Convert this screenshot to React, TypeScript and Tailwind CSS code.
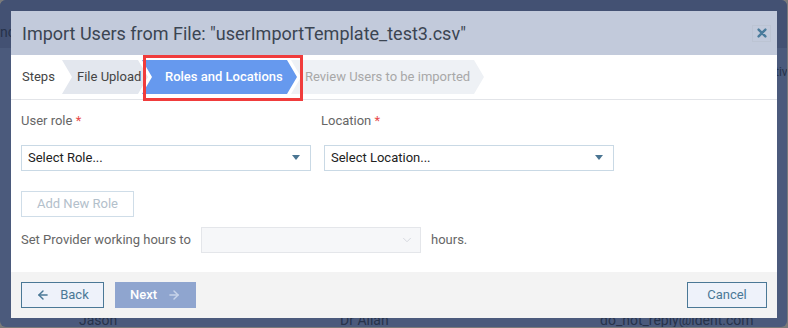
import { ArrowLeft, ArrowRight, ChevronDown } from 'lucide-react'

const font = { fontFamily: 'Roboto, "Liberation Sans", sans-serif' }

const chevron = 'polygon(0 0, calc(100% - 10px) 0, 100% 50%, calc(100% - 10px) 100%, 0 100%, 10px 50%)'

function Step({ label, cls }: { label: string; cls: string }) {
  return (
    <div className={`flex h-[34px] shrink-0 items-center text-[13px] ${cls}`} style={{ clipPath: chevron }}>
      {label}
    </div>
  )
}

function Caret() {
  return <span className="h-0 w-0 border-x-[4px] border-t-[5px] border-x-transparent border-t-[#4a7592]" />
}

export default function App() {
  return (
    <div className="h-[328px] w-[788px] overflow-hidden bg-[#7a7a7a]" style={font}>
      <div className="relative h-[327px] w-[787px] overflow-hidden rounded-[6px] bg-[#4b5a7c]">
        {/* page behind the modal */}
        <div className="h-[48px] bg-[#435173]" />
        <span className="absolute left-0 top-[22px] text-[14px] text-[#26324a]">nc</span>
        <span className="absolute left-[775px] top-[63px] text-[12px] text-[#26324a]">tiv</span>
        <span className="absolute left-[79px] top-[310px] text-[14px] text-[#26324a]">Jason</span>
        <span className="absolute left-[340px] top-[310px] text-[14px] text-[#26324a]">Dr Allan</span>
        <span className="absolute left-[600px] top-[310px] text-[14px] text-[#26324a]">do_not_reply@ident.com</span>

        {/* modal */}
        <div className="absolute left-[11px] top-[11px] flex h-[307px] w-[766px] flex-col bg-white">
          <div className="flex h-[44px] items-center justify-between bg-[#c2cadb] pl-[11px] pr-[6px]">
            <span className="text-[18px] text-[#3b4552]">Import Users from File: "userImportTemplate_test3.csv"</span>
            <span className="flex h-[17px] w-[19px] items-center justify-center border border-[#bcc4d3] text-[#4b7c9c]">
              <svg width="10" height="10" viewBox="0 0 10 10">
                <path d="M1.6 1.6 L8.4 8.4 M8.4 1.6 L1.6 8.4" stroke="currentColor" strokeWidth="2.4" strokeLinecap="round" />
              </svg>
            </span>
          </div>

          <div className="relative flex h-[45px] items-center border-b border-[#e2e4e8] pl-[11px]">
            <span className="w-[40px] text-[13px] text-[#444]">Steps</span>
            <Step label="File Upload" cls="w-[86px] pl-[15px] bg-[#e3e7ee] text-[#444]" />
            <Step label="Roles and Locations" cls="-ml-[6px] w-[155px] pl-[23px] bg-[#6699ee] text-white font-medium" />
            <Step label="Review Users to be imported" cls="-ml-[6px] w-[193px] pl-[14px] bg-[#eef1f5] text-[#a8a8a8]" />
            {/* highlight box drawn over the active step */}
            <div className="pointer-events-none absolute left-[132px] top-0 h-[46px] w-[160px] border-[3px] border-[#f03c3c]" />
          </div>

          <div className="flex-1 px-[10px] pt-[11px]">
            <div className="flex gap-[10px]">
              <div className="w-[290px]">
                <div className="text-[13px] text-[#666]">
                  User role <span className="text-[#e84b4b]">*</span>
                </div>
                <div className="mt-[14px] flex h-[26px] items-center justify-between border border-[#c9d9e5] pl-[6px] pr-[10px] text-[13px] text-[#222]">
                  Select Role...
                  <Caret />
                </div>
              </div>
              <div className="w-[293px]">
                <div className="text-[13px] text-[#666]">
                  Location <span className="text-[#e84b4b]">*</span>
                </div>
                <div className="ml-[3px] mt-[14px] flex h-[26px] items-center justify-between border border-[#c9d9e5] pl-[6px] pr-[10px] text-[13px] text-[#222]">
                  Select Location...
                  <Caret />
                </div>
              </div>
            </div>

            <div className="mt-[20px] flex h-[26px] w-[113px] items-center justify-center border border-[#cfdde8] text-[13px] text-[#b3c0cb]">
              Add New Role
            </div>

            <div className="mt-[10px] flex items-center text-[13px] text-[#666]">
              <span className="w-[180px]">Set Provider working hours to</span>
              <div className="flex h-[26px] w-[220px] items-center justify-end border border-[#e4e6ea] bg-[#f6f7f9] pr-[6px] text-[#d0d4da]">
                <ChevronDown size={14} strokeWidth={1.5} />
              </div>
              <span className="ml-[10px]">hours.</span>
            </div>
          </div>

          <div className="flex h-[46px] items-center justify-between bg-[#f3f3f3] px-[10px]">
            <div className="flex gap-[11px]">
              <div className="flex h-[26px] w-[83px] items-center justify-center gap-[10px] border border-[#4a7896] bg-[#eef2fa] text-[13px] text-[#4a7896]">
                <ArrowLeft size={14} strokeWidth={2.5} />
                Back
              </div>
              <div className="flex h-[26px] w-[81px] items-center justify-center gap-[10px] bg-[#8fa5cf] text-[13px] font-medium text-white">
                Next
                <ArrowRight size={14} strokeWidth={2.5} className="text-[#c8d4ea]" />
              </div>
            </div>
            <div className="flex h-[26px] w-[80px] items-center justify-center border border-[#4a7896] bg-[#eef2fa] text-[13px] text-[#4a7896]">
              Cancel
            </div>
          </div>
        </div>
      </div>
    </div>
  )
}
